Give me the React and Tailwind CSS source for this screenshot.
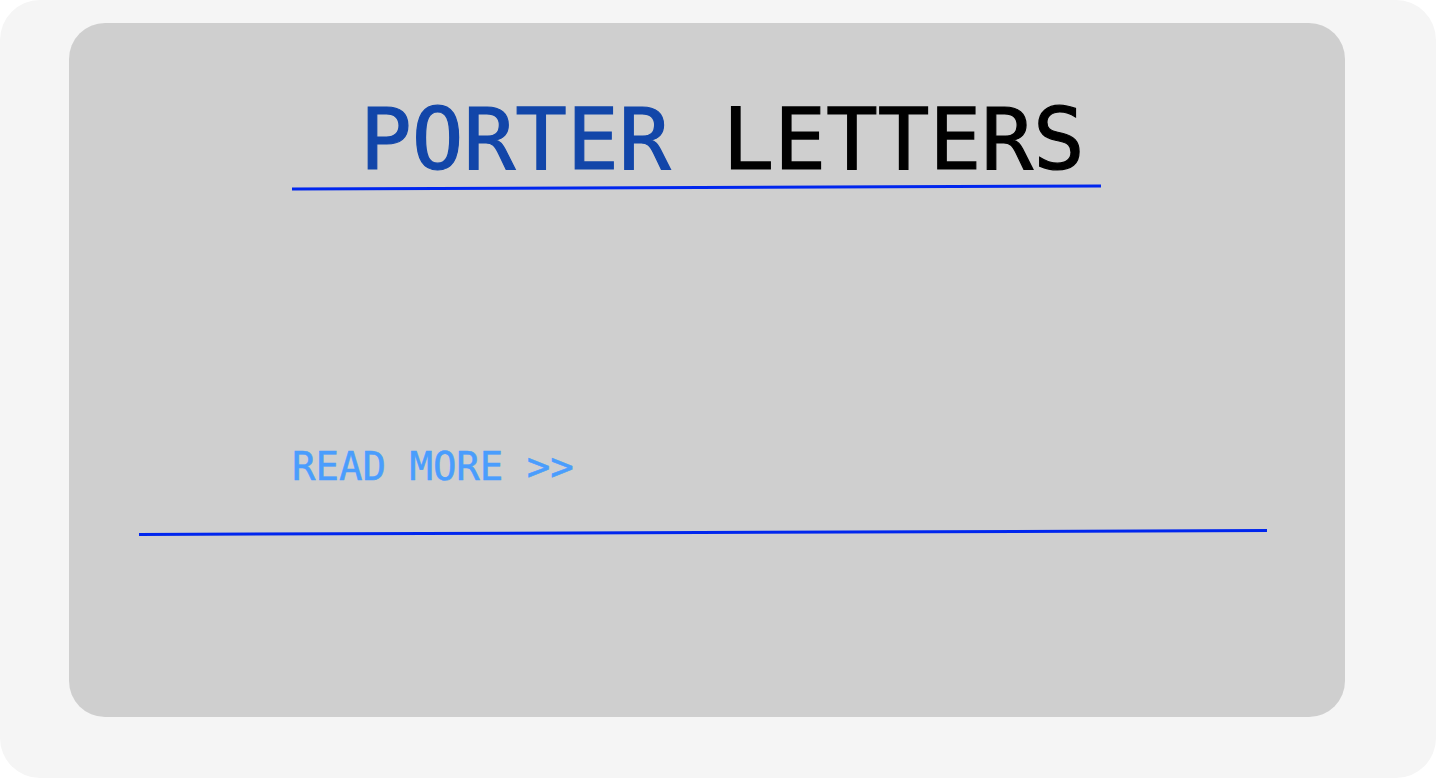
import React from "react";

export default function App() {
  return (
    <div className="w-[1436px] h-[778px] bg-white overflow-hidden">
      <div className="w-full h-full bg-[#f5f5f5] rounded-[40px] pt-[23px] pl-[69px]">
        <div
          className="w-[1276px] h-[694px] bg-[#cfcfcf] rounded-[36px] flex flex-col pt-[73px]"
          style={{ fontFamily: '"DejaVu Sans Mono", monospace' }}
        >
          <div className="ml-[223px] w-[809px] flex flex-col">
            <div className="text-[86px] leading-none text-center whitespace-pre [-webkit-text-stroke:1.2px]">
              <span className="text-[#1246a9]"> PORTER</span>
              <span className="text-black"> LETTERS</span>
            </div>
            <div className="mt-[4px] h-[3px] bg-[#0026ee] -rotate-[0.21deg]" />
          </div>
          <div className="ml-[223px] mt-[258px] text-[39px] leading-none text-[#4a9dfd] whitespace-pre [-webkit-text-stroke:0.5px]">
            READ MORE &gt;&gt;
          </div>
          <div className="ml-[70px] mt-[45px] w-[1128px] h-[3px] bg-[#0026ee] -rotate-[0.2deg]" />
        </div>
      </div>
    </div>
  );
}
